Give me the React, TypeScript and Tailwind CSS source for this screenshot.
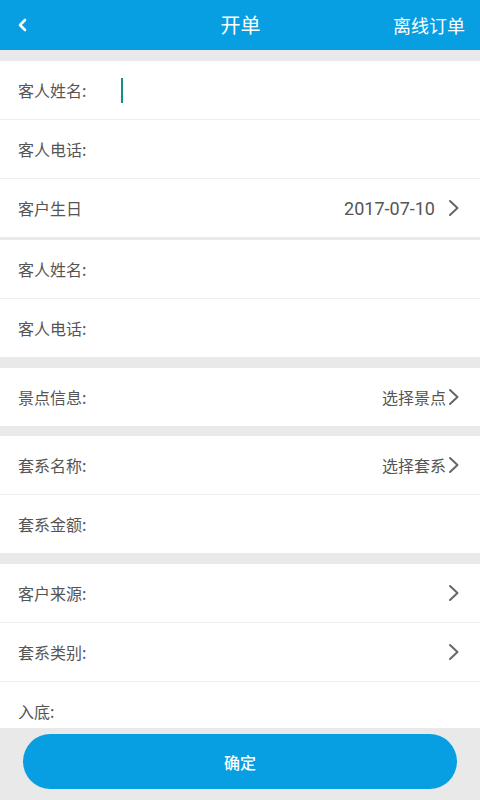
import React from "react";

const font = { fontFamily: '"Noto Sans CJK SC", Roboto, "Noto Sans", sans-serif' };

function Chevron() {
  return (
    <svg width="12" height="18" viewBox="0 0 12 18" className="shrink-0">
      <polyline points="2,2 9.5,9 2,16" fill="none" stroke="#666" strokeWidth="2" strokeLinecap="round" strokeLinejoin="round" />
    </svg>
  );
}

function Row({ label, right, chevron, caret, last }: { label: string; right?: string; chevron?: boolean; caret?: boolean; last?: boolean }) {
  return (
    <div className={`flex items-center bg-white pl-[18px] pr-[20px] ${last ? "h-[58px]" : "h-[59px] border-b border-[#efefef]"}`}>
      <span className="w-[103px] shrink-0 text-[16px] text-[#555]">{label}</span>
      {caret && <div className="h-[25px] w-[2px] bg-[#168f82]" />}
      <div className="flex-1" />
      {right && (
        <span
          className={
            right.startsWith("2")
              ? "mr-[13px] text-[18px] text-[#555]"
              : "mr-[2px] text-[16px] text-[#555]"
          }
          style={right.startsWith("2") ? { fontFamily: "Roboto, sans-serif" } : undefined}
        >
          {right}
        </span>
      )}
      {chevron && <Chevron />}
    </div>
  );
}

export default function App() {
  return (
    <div className="flex h-[800px] w-[480px] flex-col overflow-hidden bg-[#e9e9e9]" style={font}>
      <div className="flex h-[50px] shrink-0 items-center bg-[#079ee2] px-[16px] text-white">
        <svg width="14" height="16" viewBox="0 0 14 16" className="shrink-0">
          <polyline points="9,3 4,8 9,13" fill="none" stroke="#fff" strokeWidth="2.6" strokeLinecap="round" strokeLinejoin="round" />
        </svg>
        <div className="flex-1 pl-[74px] text-center text-[20px]">开单</div>
        <div className="-mr-[1px] w-[88px] text-right text-[18px]">离线订单</div>
      </div>
      <div className="flex-1 overflow-hidden">
        <div className="mt-[11px]">
          <Row label="客人姓名:" caret />
          <Row label="客人电话:" />
          <Row label="客户生日" right="2017-07-10" chevron last />
        </div>
        <div className="mt-[3px]">
          <Row label="客人姓名:" />
          <Row label="客人电话:" last />
        </div>
        <div className="mt-[11px]">
          <Row label="景点信息:" right="选择景点" chevron last />
        </div>
        <div className="mt-[10px]">
          <Row label="套系名称:" right="选择套系" chevron />
          <Row label="套系金额:" last />
        </div>
        <div className="mt-[11px]">
          <Row label="客户来源:" chevron />
          <Row label="套系类别:" chevron />
          <Row label="入底:" last />
        </div>
      </div>
      <div className="flex h-[72px] shrink-0 items-start justify-center bg-[#e9e9e9] pt-[6px]">
        <button className="flex h-[55px] w-[434px] items-center justify-center rounded-full bg-[#079ee2] text-[16px] font-medium text-white">
          确定
        </button>
      </div>
    </div>
  );
}
